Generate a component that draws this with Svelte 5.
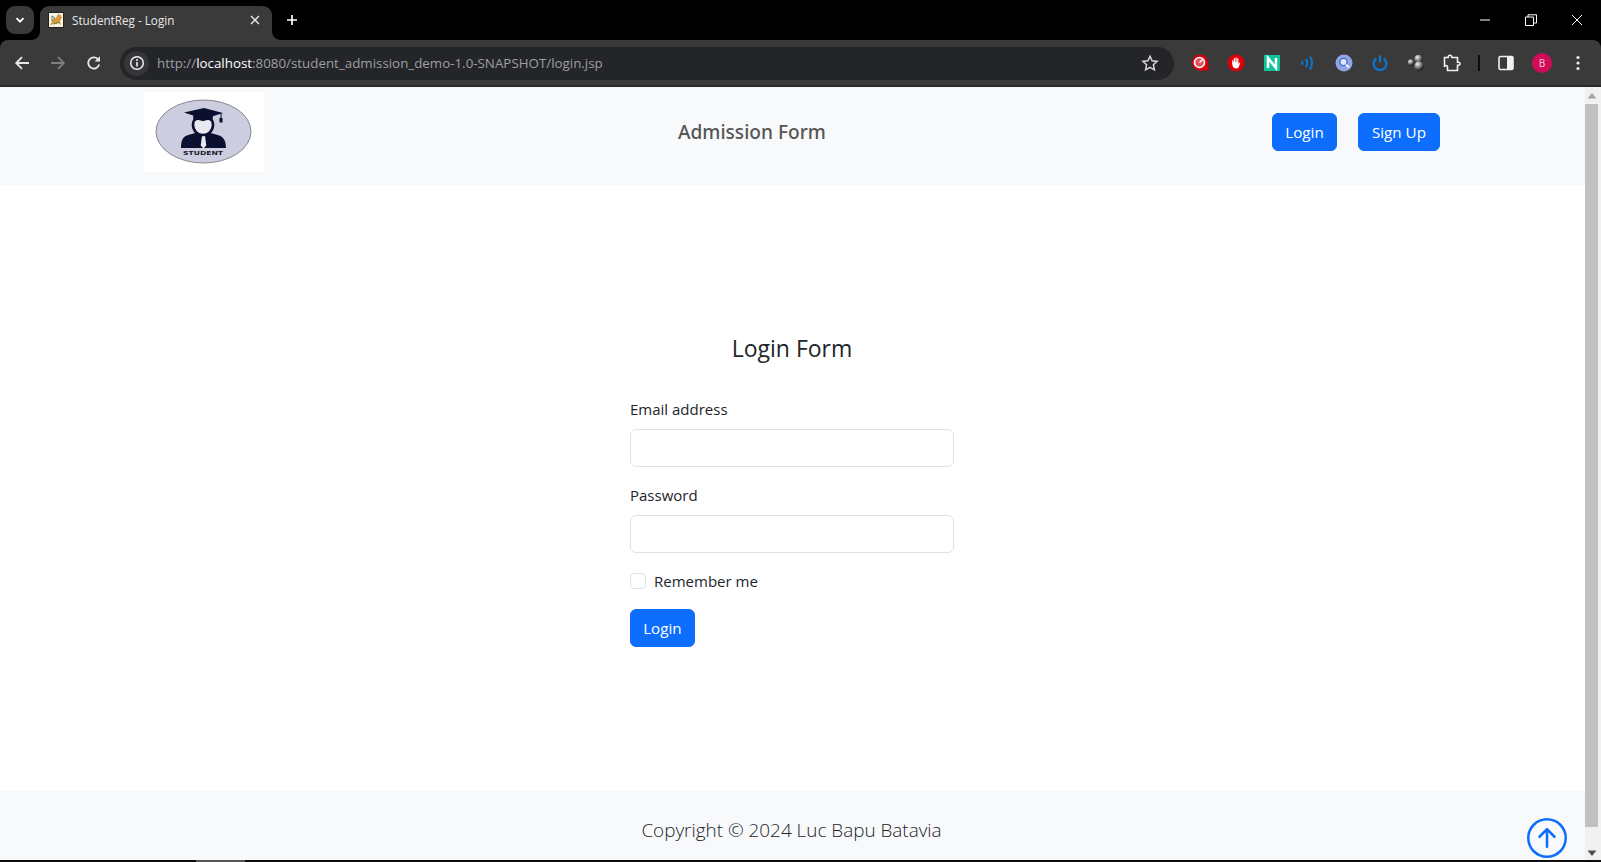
<script>
 const url = { scheme: 'http://', host: 'localhost', rest: ':8080/student_admission_demo-1.0-SNAPSHOT/login.jsp' };
</script>

<style>
 :global(body) {
  margin: 0;
  background: #000;
 }

 .screen {
  width: 1601px;
  height: 862px;
  display: flex;
  flex-direction: column;
  overflow: hidden;
  font-family: "Open Sans", "Noto Sans", sans-serif;
  color: #212529;
 }

 /* browser chrome */
 .tabstrip {
  height: 40px;
  flex: none;
  background: #000;
  display: flex;
  align-items: flex-end;
  padding-left: 6px;
  color: #fff;
 }

 .tabsearch {
  width: 28px;
  height: 28px;
  margin-bottom: 6px;
  border-radius: 9px;
  background: #3a3a3a;
  display: flex;
  align-items: center;
  justify-content: center;
 }

 .tab {
  position: relative;
  width: 232px;
  height: 34px;
  margin-left: 6px;
  box-sizing: border-box;
  padding: 0 8px 6px;
  background: #3a3a3a;
  border-radius: 9px 9px 0 0;
  display: flex;
  align-items: center;
  font-size: 11.7px;
  color: #e8e8e8;
 }

 .tab::before,
 .tab::after {
  content: '';
  position: absolute;
  bottom: 0;
  width: 8px;
  height: 8px;
 }

 .tab::before {
  left: -8px;
  background: radial-gradient(circle at 0 0, #000 7.5px, #3a3a3a 8px);
 }

 .tab::after {
  right: -8px;
  background: radial-gradient(circle at 100% 0, #000 7.5px, #3a3a3a 8px);
 }

 .tabtitle {
  margin-left: 8px;
  flex: 1;
  white-space: nowrap;
 }

 .newtab {
  margin-left: 8px;
  margin-bottom: 8px;
  width: 24px;
  height: 24px;
  display: flex;
  align-items: center;
  justify-content: center;
 }

 .winctl {
  margin-left: auto;
  margin-right: 1px;
  display: flex;
  align-self: flex-start;
 }

 .winctl div {
  width: 46px;
  height: 40px;
  display: flex;
  align-items: center;
  justify-content: center;
 }

 .toolbar {
  height: 44px;
  flex: none;
  background: #3a3a3a;
  border-radius: 8px 8px 0 0;
  border-bottom: 2px solid #2a2a2a;
  display: flex;
  align-items: center;
  padding: 1px 0 0 4px;
 }

 .nav {
  width: 36px;
  height: 36px;
  flex: none;
  display: flex;
  align-items: center;
  justify-content: center;
 }

 .omnibox {
  width: 1054px;
  height: 33px;
  margin-left: 8px;
  background: #242528;
  border-radius: 17px;
  display: flex;
  align-items: center;
  flex: none;
 }

 .info {
  width: 25px;
  height: 25px;
  margin-left: 4px;
  border-radius: 50%;
  background: #35363a;
  display: flex;
  align-items: center;
  justify-content: center;
  flex: none;
 }

 .url {
  margin-left: 8px;
  font-size: 13.35px;
  color: #9d9fa3;
  white-space: nowrap;
 }

 .url b {
  font-weight: 400;
  color: #fff;
 }

 .star {
  margin-left: auto;
  margin-right: 15px;
  display: flex;
 }

 .icons {
  display: flex;
  margin-left: 8px;
  align-items: center;
 }

 .icons .nav svg {
  display: block;
 }

 .sep {
  width: 2px;
  height: 16px;
  margin: 0 8px 0 8px;
  background: #0c0c0c;
 }

 .avatar {
  width: 20px;
  height: 20px;
  border-radius: 50%;
  background: #d00c58;
  color: #f6c9da;
  font-size: 10px;
  display: flex;
  align-items: center;
  justify-content: center;
 }

 /* page */
 .viewport {
  flex: 1;
  display: flex;
  min-height: 0;
  position: relative;
 }

 .page {
  flex: 1;
  display: flex;
  flex-direction: column;
  background: #fff;
 }

 .navbar {
  height: 98px;
  box-sizing: border-box;
  padding: 5px 0 13px;
  background: #f8f9fa;
  flex: none;
 }

 .navinner {
  width: 1296px;
  height: 80px;
  margin-left: 144px;
  display: flex;
  align-items: center;
 }

 .logo {
  width: 120px;
  height: 80px;
  background: #fff;
  flex: none;
 }

 .logo svg {
  display: block;
 }

 .brand {
  margin-left: 414px;
  font-family: "Noto Sans", sans-serif;
  font-size: 19.1px;
  font-weight: 500;
  color: #555;
  white-space: nowrap;
 }

 .navbtns {
  margin-left: auto;
  display: flex;
  gap: 21px;
 }

 .btn {
  height: 38px;
  box-sizing: border-box;
  padding: 0 12.2px;
  border: 1px solid #0d6efd;
  border-radius: 6px;
  background: #0d6efd;
  color: #fff;
  font-family: inherit;
  font-size: 15.2px;
  line-height: 24px;
  cursor: pointer;
 }

 .btn.wide {
  padding: 0 13px;
 }

 main {
  flex: 1;
  display: flex;
  flex-direction: column;
  align-items: center;
  padding: 149px 1px 0 0;
 }

 h3 {
  margin: 0 0 34px;
  font-size: 23px;
  font-weight: 400;
  line-height: 29px;
 }

 form {
  width: 324px;
  display: flex;
  flex-direction: column;
  align-items: flex-start;
 }

 label {
  font-size: 15px;
  line-height: 24px;
 }

 .lbl {
  display: block;
  margin-bottom: 8px;
 }

 .field {
  width: 100%;
  margin-bottom: 16px;
 }

 .field input {
  display: block;
  width: 100%;
  height: 38px;
  box-sizing: border-box;
  border: 1px solid #dee2e6;
  border-radius: 6px;
  background: #fff;
 }

 .check {
  display: flex;
  align-items: center;
  gap: 8px;
  height: 24px;
  margin-bottom: 16px;
 }

 .check input {
  appearance: none;
  width: 16px;
  height: 16px;
  margin: 0;
  border: 1px solid #dee2e6;
  border-radius: 4px;
  background: #fff;
 }

 footer {
  height: 69px;
  flex: none;
  box-sizing: border-box;
  padding: 24px 2px 0 0;
  background: #f8f9fa;
  text-align: center;
  font-size: 18.9px;
  font-weight: 300;
  line-height: 30px;
  color: #212529;
 }

 .totop {
  position: absolute;
  left: 1527px;
  top: 731px;
  width: 40px;
  height: 40px;
  color: #0d6efd;
 }

 .totop svg {
  display: block;
 }

 .scrollbar {
  width: 16px;
  flex: none;
  background: #f1f1f1;
  display: flex;
  flex-direction: column;
  align-items: flex-start;
 }

 .sbarrow {
  width: 14px;
  height: 17px;
  flex: none;
  display: flex;
  align-items: center;
  justify-content: center;
 }

 .sbarrow.down {
  height: 33px;
  align-items: flex-end;
  padding-bottom: 4px;
  box-sizing: border-box;
 }

 .thumb {
  width: 13px;
  flex: 1;
  background: #c1c1c1;
 }

 .taskbar {
  height: 2px;
  flex: none;
  background: #0c0c0c;
  padding-left: 196px;
 }

 .taskbar div {
  width: 49px;
  height: 2px;
  background: #555;
 }
</style>

<div class="screen">
 <div class="tabstrip">
  <div class="tabsearch">
   <svg width="12" height="12" viewBox="0 0 12 12"><path d="M2.5 4.2 6 7.7l3.5-3.5" fill="none" stroke="#fff" stroke-width="1.8"/></svg>
  </div>
  <div class="tab">
   <svg width="16" height="16" viewBox="0 0 16 16">
    <rect x="0.5" y="0.5" width="15" height="15" fill="#f7f3e8" stroke="#222"/>
    <path d="M2 13l3-5 3-2 2-4 3 1 1 3-2 3 1 4-3-2-3 1z" fill="#d89a3c"/>
    <path d="M4 4l3 2-3 3zM6 12l6-2" stroke="#6d7d4a" stroke-width="1" fill="none"/>
   </svg>
   <span class="tabtitle">StudentReg - Login</span>
   <svg width="10" height="10" viewBox="0 0 10 10" style="margin-right:4px"><path d="M1 1l8 8M9 1l-8 8" stroke="#e8e8e8" stroke-width="1.4"/></svg>
  </div>
  <div class="newtab">
   <svg width="12" height="12" viewBox="0 0 12 12"><path d="M6 1v10M1 6h10" stroke="#fff" stroke-width="1.7"/></svg>
  </div>
  <div class="winctl">
   <div><svg width="12" height="12" viewBox="0 0 12 12"><path d="M1 6h10" stroke="#fff"/></svg></div>
   <div><svg width="12" height="12" viewBox="0 0 12 12"><path d="M.5 3h8v8.5h-8zM3 3V.8h8.5V9H8.5" fill="none" stroke="#fff"/></svg></div>
   <div><svg width="12" height="12" viewBox="0 0 12 12"><path d="M1 1l10 10M11 1 1 11" stroke="#fff"/></svg></div>
  </div>
 </div>

 <div class="toolbar">
  <div class="nav"><svg width="16" height="16" viewBox="0 0 16 16"><path d="M15 8H2.5M8 2.2 2.2 8 8 13.8" fill="none" stroke="#e8e8e8" stroke-width="1.8"/></svg></div>
  <div class="nav"><svg width="16" height="16" viewBox="0 0 16 16"><path d="M1 8h12.5M8 2.2 13.8 8 8 13.8" fill="none" stroke="#808080" stroke-width="1.8"/></svg></div>
  <div class="nav"><svg width="16" height="16" viewBox="0 0 16 16"><path d="M13.2 9.5A5.6 5.6 0 1 1 11.8 4" fill="none" stroke="#e8e8e8" stroke-width="1.8"/><path d="M14 1.2v5.4H8.6z" fill="#e8e8e8"/></svg></div>
  <div class="omnibox">
   <div class="info">
    <svg width="16" height="16" viewBox="0 0 16 16"><circle cx="8" cy="8" r="6.3" fill="none" stroke="#f0f0f0" stroke-width="1.5"/><path d="M8 7v4.4" stroke="#f0f0f0" stroke-width="1.6"/><circle cx="8" cy="5" r="1" fill="#f0f0f0"/></svg>
   </div>
   <span class="url">{url.scheme}<b>{url.host}</b>{url.rest}</span>
   <span class="star"><svg width="18" height="18" viewBox="0 0 18 18"><path d="M9 2.2l2.1 4.6 5 .6-3.7 3.4 1 5L9 13.3l-4.4 2.5 1-5L1.9 7.4l5-.6z" fill="none" stroke="#d6d6d6" stroke-width="1.5"/></svg></span>
  </div>
  <div class="icons">
   <div class="nav">
    <svg width="18" height="18" viewBox="0 0 18 18"><circle cx="9" cy="8.5" r="8" fill="#d9000f"/><path d="M9 16.5h8.500V9z" fill="#d9000f"/><circle cx="8.5" cy="8.5" r="5" fill="#e0525a" stroke="#fff" stroke-width="1.6"/><path d="M8.5 8.5l3-3" stroke="#fff" stroke-width="1.5"/></svg>
   </div>
   <div class="nav">
    <svg width="18" height="18" viewBox="0 0 18 18"><circle cx="9" cy="9" r="8.5" fill="#e00008"/><path d="M5.200 10V6.200h1.100V8h.5V4.300h1.200V8h.5V3.500h1.200V8h.5V4.500h1.200V10l1-1.500.9.600-1.500 3.700c-.5 1-1.300 1.700-2.500 1.700-2 0-3.900-1.300-4.100-4.500z" fill="#fff"/></svg>
   </div>
   <div class="nav">
    <svg width="16" height="16" viewBox="0 0 16 16"><rect width="16" height="16" fill="#10c39a"/><path d="M4 13V3l8 10V3" fill="none" stroke="#fff" stroke-width="2.5"/></svg>
   </div>
   <div class="nav">
    <svg width="18" height="18" viewBox="0 0 18 18"><g fill="none" stroke="#1273c4" stroke-width="2.2"><path d="M3 7q1 2 0 4"/><path d="M7 4.800q2.400 4.200 0 8.400"/><path d="M11 2.500q3.800 6.500 0 13"/></g></svg>
   </div>
   <div class="nav">
    <svg width="18" height="18" viewBox="0 0 18 18"><circle cx="9" cy="9" r="8.5" fill="#8fa6e6"/><circle cx="8.5" cy="8" r="3.6" fill="#dfe7fb" stroke="#3f63c9" stroke-width="1.3"/><path d="M11 10.700l3 3" stroke="#fff" stroke-width="1.8"/></svg>
   </div>
   <div class="nav">
    <svg width="18" height="18" viewBox="0 0 18 18"><path d="M5.200 4.500a6.400 6.400 0 1 0 7.600 0" fill="none" stroke="#0f74c8" stroke-width="2.4"/><path d="M9 1.500v7" stroke="#0f74c8" stroke-width="2.4"/></svg>
   </div>
   <div class="nav">
    <svg width="18" height="18" viewBox="0 0 18 18"><defs><radialGradient id="ball" cx="35%" cy="30%" r="70%"><stop offset="0" stop-color="#f4f4f4"/><stop offset="1" stop-color="#1c1c1c"/></radialGradient></defs><circle cx="4" cy="8.500" r="3.200" fill="url(#ball)"/><circle cx="11.500" cy="5" r="4.200" fill="url(#ball)"/><circle cx="12" cy="12" r="4.700" fill="url(#ball)"/></svg>
   </div>
   <div class="nav">
    <svg width="18" height="18" viewBox="0 0 18 18"><path d="M1.500 3.500h3.700v-.5a1.800 1.800 0 0 1 3.600 0v.5h5.700v4.700h1a1.500 1.500 0 0 1 0 3h-1v5.300H4.500v-3.500a1.500 1.500 0 0 0-3 0z" fill="none" stroke="#f0f0f0" stroke-width="1.6"/></svg>
   </div>
   <div class="sep"></div>
   <div class="nav">
    <svg width="16" height="16" viewBox="0 0 16 16"><rect x="1" y="1.500" width="14" height="13" rx="1.500" fill="none" stroke="#f0f0f0" stroke-width="1.6"/><rect x="9" y="1.500" width="6" height="13" fill="#f0f0f0"/></svg>
   </div>
   <div class="nav"><div class="avatar">B</div></div>
   <div class="nav">
    <svg width="16" height="16" viewBox="0 0 16 16"><circle cx="8" cy="2.500" r="1.600" fill="#eee"/><circle cx="8" cy="8" r="1.600" fill="#eee"/><circle cx="8" cy="13.500" r="1.600" fill="#eee"/></svg>
   </div>
  </div>
 </div>

 <div class="viewport">
  <div class="page">
   <header class="navbar">
    <div class="navinner">
     <div class="logo">
      <svg width="120" height="80" viewBox="0 0 120 80">
       <ellipse cx="59.5" cy="39.5" rx="47.5" ry="31.500" fill="#cdcde0" stroke="#6e6e78" stroke-width="0.8"/>
       <path d="M37 56c0-8 2-12 9-13.500l7-2 6 3.500 6-3.500 7 2c7 1.500 10 5.500 10 13.500z" fill="#0c1030"/>
       <path d="M58 44h3l1.300 9.500-2.800 3-2.800-3z" fill="#e8e8ee"/>
       <circle cx="59" cy="33" r="10" fill="#e9e9f2" stroke="#0c1030" stroke-width="2.6"/>
       <path d="M49 24c3-3 17-3 20 0l-1 6c-4-4-7-1-9-1s-5-3-9 1z" fill="#0c1030"/>
       <path d="M40 20.500l20-4.500 19 5-19 6z" fill="#0c1030"/>
       <path d="M77 21v6" stroke="#0c1030" stroke-width="1"/>
       <rect x="75.5" y="26" width="3" height="4.500" fill="#0c1030"/>
       <text x="39" y="62.500" textLength="40" lengthAdjust="spacingAndGlyphs" font-family="'DejaVu Sans', sans-serif" font-size="5.500" font-weight="700" fill="#1a1a2a">STUDENT</text>
      </svg>
     </div>
     <div class="brand">Admission Form</div>
     <div class="navbtns">
      <button class="btn">Login</button>
      <button class="btn wide">Sign Up</button>
     </div>
    </div>
   </header>

   <main>
    <h3>Login Form</h3>
    <form>
     <div class="field">
      <label class="lbl" for="email">Email address</label>
      <input id="email" type="email" />
     </div>
     <div class="field">
      <label class="lbl" for="password">Password</label>
      <input id="password" type="password" />
     </div>
     <div class="check">
      <input id="remember" type="checkbox" />
      <label for="remember">Remember me</label>
     </div>
     <button class="btn" type="button">Login</button>
    </form>
   </main>

   <footer>Copyright © 2024 Luc Bapu Batavia</footer>
  </div>

  <div class="scrollbar">
   <div class="sbarrow"><svg width="10" height="6" viewBox="0 0 10 6"><path d="M5 0l4.500 5.500h-9z" fill="#a3a3a3"/></svg></div>
   <div class="thumb"></div>
   <div class="sbarrow down"><svg width="10" height="6" viewBox="0 0 10 6"><path d="M5 6 .5 .5h9z" fill="#505050"/></svg></div>
  </div>

  <div class="totop">
   <svg width="40" height="40" viewBox="0 0 16 16" fill="currentColor"><path d="M1 8a7 7 0 1 0 14 0A7 7 0 0 0 1 8zm15 0A8 8 0 1 1 0 8a8 8 0 0 1 16 0zm-7.500 3.500a.5.500 0 0 1-1 0V5.707L5.354 7.854a.5.500 0 1 1-.708-.708l3-3a.5.500 0 0 1 .708 0l3 3a.5.500 0 0 1-.708.708L8.500 5.707V11.500z"/></svg>
  </div>
 </div>

 <div class="taskbar"><div></div></div>
</div>
